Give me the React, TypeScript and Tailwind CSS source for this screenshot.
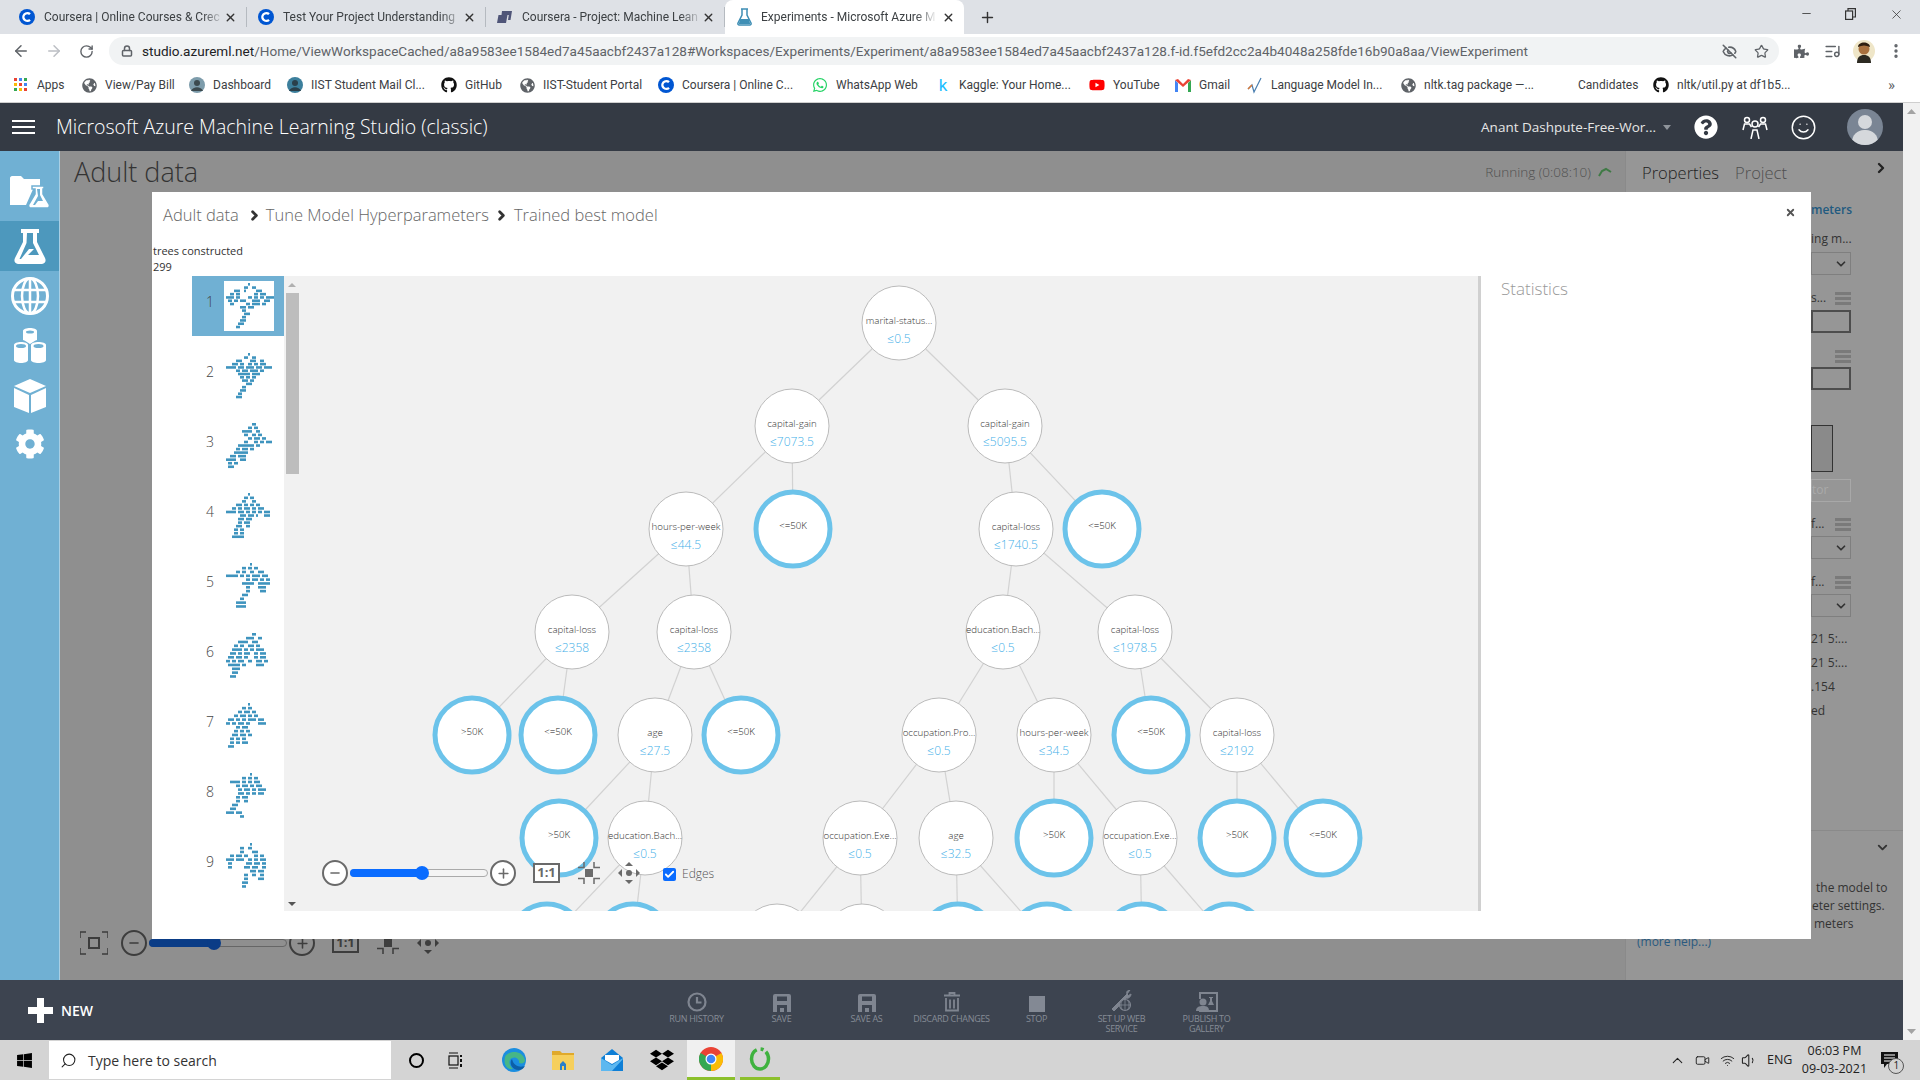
import React from 'react';
import { ArrowLeft, ArrowRight, RotateCw, Lock, Star, EyeOff, ListMusic, MoreVertical, Plus, ChevronDown, ChevronRight, ChevronUp, Search, Smile, Wifi, Volume1, Video, X, Minus, Check } from 'lucide-react';
import { FaGithub, FaWhatsapp, FaYoutube, FaDropbox, FaWindows, FaPuzzlePiece, FaGlobeAmericas, FaCog, FaQuestionCircle } from 'react-icons/fa';

const Coursera = ({ size = 16 }: { size?: number }) => (
  <svg width={size} height={size} viewBox="0 0 16 16">
    <circle cx="8" cy="8" r="8" fill="#0056d2" />
    <path d="M11 5.2A3.9 3.9 0 1 0 11 10.8" fill="none" stroke="#fff" strokeWidth="2.4" />
  </svg>
);

const FlaskFav = () => (
  <svg width="15" height="18" viewBox="0 0 15 18">
    <path d="M4 1h7M5 1v6L1 15c-.4 1 .2 2 1.200 2h10.600c1 0 1.600-1 1.200-2L10 7V1" fill="none" stroke="#3f8fb5" strokeWidth="1.500" />
    <path d="M3.200 11h8.600l1.500 5H1.700z" fill="#3f8fb5" />
  </svg>
);

const tabs = [
  { title: 'Coursera | Online Courses & Crec', icon: <Coursera /> },
  { title: 'Test Your Project Understanding', icon: <Coursera /> },
  {
    title: 'Coursera - Project: Machine Lean',
    icon: (
      <svg width="16" height="16" viewBox="0 0 16 16">
        <path d="M5 2h10l-1.500 9H11l.8-5H4.500z" fill="#4f5578" />
        <path d="M1.500 6h9l-1.500 8H0z" fill="#4f5578" />
      </svg>
    ),
  },
];

const DarkGlobe = () => <FaGlobeAmericas size={15} className="text-[#5f6368]" />;
const Photo = ({ a, b }: { a: string; b: string }) => (
  <svg width="16" height="16" viewBox="0 0 16 16">
    <circle cx="8" cy="8" r="8" fill={a} />
    <circle cx="8" cy="6" r="3" fill={b} />
    <path d="M2 14c2-5 10-5 12 0z" fill={b} />
  </svg>
);

const bookmarks = [
  { w: 'w-[68px]', label: 'Apps', icon: (
    <svg width="14" height="14" viewBox="0 0 14 14">
      <rect x="0" y="0" width="3" height="3" fill="#ea4335" /><rect x="5" y="0" width="3" height="3" fill="#4285f4" /><rect x="10" y="0" width="3" height="3" fill="#34a853" />
      <rect x="0" y="5" width="3" height="3" fill="#fbbc05" /><rect x="5" y="5" width="3" height="3" fill="#ea4335" /><rect x="10" y="5" width="3" height="3" fill="#4285f4" />
      <rect x="0" y="10" width="3" height="3" fill="#34a853" /><rect x="5" y="10" width="3" height="3" fill="#fbbc05" /><rect x="10" y="10" width="3" height="3" fill="#ea4335" />
    </svg>
  ) },
  { w: 'w-[108px]', label: 'View/Pay Bill', icon: <DarkGlobe /> },
  { w: 'w-[98px]', label: 'Dashboard', icon: <Photo a="#7d9cab" b="#3c4a4f" /> },
  { w: 'w-[154px]', label: 'IIST Student Mail Cl...', icon: <Photo a="#3c7f9c" b="#2a3f4a" /> },
  { w: 'w-[78px]', label: 'GitHub', icon: <FaGithub size={16} className="text-[#111]" /> },
  { w: 'w-[139px]', label: 'IIST-Student Portal', icon: <DarkGlobe /> },
  { w: 'w-[154px]', label: 'Coursera | Online C...', icon: <Coursera /> },
  { w: 'w-[123px]', label: 'WhatsApp Web', icon: <FaWhatsapp size={16} className="text-[#25d366]" /> },
  { w: 'w-[154px]', label: 'Kaggle: Your Home...', icon: <span className="w-4 text-center text-[17px] leading-4 text-[#20beff]">k</span> },
  { w: 'w-[86px]', label: 'YouTube', icon: <FaYoutube size={16} className="text-[#ff0000]" /> },
  { w: 'w-[72px]', label: 'Gmail', icon: (
    <svg width="16" height="14" viewBox="0 0 16 14">
      <path d="M0 2v12h3V5z" fill="#4285f4" /><path d="M16 2v12h-3V5z" fill="#34a853" />
      <path d="M0 2l3-1 5 5 5-5 3 1-8 7z" fill="#ea4335" />
    </svg>
  ) },
  { w: 'w-[153px]', label: 'Language Model In...', icon: (
    <svg width="16" height="18" viewBox="0 0 16 18" fill="none">
      <path d="M1 13l4-4 2 7 7-14" stroke="#4a7fb0" strokeWidth="1.200" />
      <path d="M1 13l4-4" stroke="#e0762f" strokeWidth="1.200" />
    </svg>
  ) },
  { w: 'w-[154px]', label: 'nltk.tag package —...', icon: <DarkGlobe /> },
  { w: 'w-[99px]', label: 'Candidates', icon: <span className="w-4" /> },
  { w: 'w-[227px]', label: 'nltk/util.py at df1b5...', icon: <FaGithub size={16} className="text-[#111]" /> },
];

// drawn mini trees for the left list
const thumbs = [
  ['            #', '          ##  ##', '     ###  #     ###', '   ## ##       ## ###', ' #### ##    ## ## ## ####', '  ## ## ###   ####  ###', '   ##      ## #### ##', '        ### ###', '         ##', '          ###', '         ##', '        ###', '       ###', '      ##'],
  ['            #', '          ##  ##', '      ###    ###  ##', '    ### ##  ## ## ###', ' ##### ### #### ### ####', '      ## ### #### ##', '       ###### ####', '        ## ## ##', '         ### ##', '           ###', '         ##', '        ###', '       ##', '      ###'],
  ['              ##', '            ## ##', '         #####  ##', '          ##  ## ##', '            ## ### ##', '          ##   ## ## ###', '       ######## ##', '      ## ### ##', '     #######', '   ### ####', ' #####  ###', '  ## ##', '  ###'],
  ['            #', '          ## ##', '         ##   ##', '      ### ## ## ##', '    ## ## ### ## ###', ' ##### ### ## ## ## ###', '        ### ### #   ###', '       ### ###', '       ## ###', '      ###  ##', '     ## ##', '     ## ##', '    ######'],
  ['             #', '         ## ## ##', '      ## ##  ##  ###', ' ###### ## ## #### ###', '           ## ### ## ##', '         ######  ######', '           ##    ####', '           ##     ###', '         ###', '        ##', '      #####', '      #####'],
  ['              ##', '           ####  ##', '       #####  ###', '     ## ##  ### ##', '    ##### ## ## ####', '   ### ## ###  ## ###', '  ### ### ##   ## ###', ' ## ## ###  ##  ### ##', '  ###### ##     ####', '    ####', '    ###', '   ###'],
  ['            #', '         ## ##', '       ## ### ##', '     ## ### ## ##', '  ### ## ## #### ###', ' ## ## ### ##    ####', '      ## ###', '     ## ## ##', '    ### ### ##', '   ## ## ##', '   ## ## ###', '  ###'],
  ['             #', '         ## ## ##', '   ##### ## ## ###', '      ## ### ## ###', '       ## ### ## ####', '       ### ## ## ###', '      ## ###', '      ##  ##', '    ###', '   ###', ' #### ###', '        ##'],
  ['             #', '        ##  ##', '        ##    ###', '   ## ### ##   ## ##', ' #### ####  ## ## ###', '  ##       ### ### ##', '  ##      ### ###  ##', '             ### ###', '          ##  ##  ##', '          ##     ###', '         ###', '         ##'],
];

const Thumb = ({ rows }: { rows: string[] }) => (
  <svg width="50" height="50" viewBox="0 0 50 50">
    {rows.flatMap((row, r) =>
      row.split('').map((ch, c) =>
        ch === '#' ? <rect key={`${r}-${c}`} x={c * 2} y={(r * 46) / rows.length + 2} width="2" height="2.600" fill="#3f94be" /> : null
      )
    )}
  </svg>
);

type TreeNode = { x: number; y: number; label: string; value?: string };

const nodes: TreeNode[] = [
  { x: 899, y: 323, label: 'marital-status...', value: '≤0.5' },
  { x: 792, y: 426, label: 'capital-gain', value: '≤7073.5' },
  { x: 1005, y: 426, label: 'capital-gain', value: '≤5095.5' },
  { x: 686, y: 529, label: 'hours-per-week', value: '≤44.5' },
  { x: 793, y: 529, label: '<=50K' },
  { x: 1016, y: 529, label: 'capital-loss', value: '≤1740.5' },
  { x: 1102, y: 529, label: '<=50K' },
  { x: 572, y: 632, label: 'capital-loss', value: '≤2358' },
  { x: 694, y: 632, label: 'capital-loss', value: '≤2358' },
  { x: 1003, y: 632, label: 'education.Bach...', value: '≤0.5' },
  { x: 1135, y: 632, label: 'capital-loss', value: '≤1978.5' },
  { x: 472, y: 735, label: '>50K' },
  { x: 558, y: 735, label: '<=50K' },
  { x: 655, y: 735, label: 'age', value: '≤27.5' },
  { x: 741, y: 735, label: '<=50K' },
  { x: 939, y: 735, label: 'occupation.Pro...', value: '≤0.5' },
  { x: 1054, y: 735, label: 'hours-per-week', value: '≤34.5' },
  { x: 1151, y: 735, label: '<=50K' },
  { x: 1237, y: 735, label: 'capital-loss', value: '≤2192' },
  { x: 559, y: 838, label: '>50K' },
  { x: 645, y: 838, label: 'education.Bach...', value: '≤0.5' },
  { x: 860, y: 838, label: 'occupation.Exe...', value: '≤0.5' },
  { x: 956, y: 838, label: 'age', value: '≤32.5' },
  { x: 1054, y: 838, label: '>50K' },
  { x: 1140, y: 838, label: 'occupation.Exe...', value: '≤0.5' },
  { x: 1237, y: 838, label: '>50K' },
  { x: 1323, y: 838, label: '<=50K' },
  // last row is cut by the canvas edge, only the arcs show
  { x: 547, y: 941, label: '' },
  { x: 633, y: 941, label: '' },
  { x: 777, y: 941, label: '', value: ' ' },
  { x: 862, y: 941, label: '', value: ' ' },
  { x: 958, y: 941, label: '' },
  { x: 1047, y: 941, label: '' },
  { x: 1142, y: 941, label: '' },
  { x: 1229, y: 941, label: '' },
];

const edges = [[0, 1], [0, 2], [1, 3], [1, 4], [2, 5], [2, 6], [3, 7], [3, 8], [5, 9], [5, 10], [7, 11], [7, 12], [8, 13], [8, 14], [9, 15], [9, 16], [10, 17], [10, 18], [13, 19], [13, 20], [15, 21], [15, 22], [16, 23], [16, 24], [18, 25], [18, 26], [20, 27], [20, 28], [21, 29], [21, 30], [22, 31], [22, 32], [24, 33], [24, 34]];

const CANVAS_X = 284;
const CANVAS_Y = 276;

const NodeBubble = ({ node }: { node: TreeNode }) =>
  node.value ? (
    <div
      className="absolute flex h-[75px] w-[75px] -translate-x-1/2 -translate-y-1/2 flex-col items-center rounded-full border border-[#bbbbbb] bg-white pt-[28px]"
      style={{ left: node.x - CANVAS_X, top: node.y - CANVAS_Y }}
    >
      {node.label && <div className="text-[9.700px] leading-[12px] font-light whitespace-nowrap text-[#333333]">{node.label}</div>}
      {node.label && <div className="mt-[5px] text-[12px] leading-[14px] font-light text-[#45b0e8]">{node.value}</div>}
    </div>
  ) : (
    <div
      className="absolute flex h-[79px] w-[79px] -translate-x-1/2 -translate-y-1/2 flex-col items-center rounded-full border-[5px] border-[#6cc3ea] bg-white pt-[25px]"
      style={{ left: node.x - CANVAS_X, top: node.y - CANVAS_Y }}
    >
      {node.label && <div className="text-[9.700px] leading-[12px] font-light whitespace-nowrap text-[#222222]">{node.label}</div>}
    </div>
  );

const FitIcon = ({ color }: { color: string }) => (
  <svg width="22" height="22" viewBox="0 0 22 22" fill="none" stroke={color} strokeWidth="1.500">
    <rect x="7" y="7" width="8" height="8" fill={color} stroke="none" />
    <path d="M6 0v5.500H0M16 0v5.500h6M6 22v-5.500H0M16 22v-5.500h6" />
  </svg>
);

const PanIcon = ({ color }: { color: string }) => (
  <svg width="22" height="22" viewBox="0 0 22 22" fill={color}>
    <circle cx="11" cy="11" r="3" />
    <path d="M11 0l4 4H7zM11 22l-4-4h8zM0 11l4-4v8zM22 11l-4 4V7z" />
  </svg>
);

// zoom toolbar, used on the graph and (dimmed) behind the dialog
const ZoomControls = ({ dim }: { dim?: boolean }) => {
  const color = dim ? '#3d3d3d' : '#6a6a6a';
  return (
    <div className="flex items-center">
      <div className={dim ? 'flex h-[26px] w-[26px] items-center justify-center rounded-full border-[2.500px] border-[#3d3d3d]' : 'flex h-[26px] w-[26px] items-center justify-center rounded-full border-[2.500px] border-[#6a6a6a] bg-white'}>
        <Minus size={14} strokeWidth={2.500} color={color} />
      </div>
      <div className={dim ? 'relative mx-[2px] h-[8px] w-[138px] rounded-full border border-[#666666]' : 'relative mx-[2px] h-[8px] w-[138px] rounded-full border border-[#aaaaaa] bg-[#f4f4f4]'}>
        <div className={dim ? 'absolute -top-[1px] -left-[1px] h-[8px] w-[64px] rounded-l-full bg-[#0a3c86]' : 'absolute -top-[1px] -left-[1px] h-[8px] w-[72px] rounded-l-full bg-[#0a6cff]'} />
        <div className={dim ? 'absolute -top-[4px] left-[57px] h-[14px] w-[14px] rounded-full bg-[#0a3c86]' : 'absolute -top-[4px] left-[64px] h-[14px] w-[14px] rounded-full bg-[#0a6cff]'} />
      </div>
      <div className={dim ? 'flex h-[26px] w-[26px] items-center justify-center rounded-full border-[2.500px] border-[#3d3d3d]' : 'flex h-[26px] w-[26px] items-center justify-center rounded-full border-[2.500px] border-[#6a6a6a] bg-white'}>
        <Plus size={15} strokeWidth={2.500} color={color} />
      </div>
      <div className={dim ? 'ml-[17px] flex h-[20px] w-[27px] items-center justify-center border-2 border-[#3d3d3d] text-[13px] font-bold text-[#3d3d3d]' : 'ml-[17px] flex h-[20px] w-[27px] items-center justify-center border-2 border-[#6a6a6a] bg-white text-[13px] font-bold text-[#6a6a6a]'}>
        1:1
      </div>
      <div className="ml-[18px]"><FitIcon color={color} /></div>
      <div className="ml-[18px]"><PanIcon color={color} /></div>
    </div>
  );
};

const LinesIcon = () => (
  <div className="flex w-4 flex-col gap-[2px]">
    <div className="h-[3px] bg-[#7a7a7a]" />
    <div className="h-[3px] bg-[#7a7a7a]" />
    <div className="h-[3px] bg-[#7a7a7a]" />
  </div>
);

const SelectBox = ({ className }: { className: string }) => (
  <div className={`flex h-[23px] w-[40px] items-center justify-end border border-[#7f7f7f] pr-[2px] ${className}`}>
    <ChevronDown size={14} strokeWidth={3} className="text-[#333333]" />
  </div>
);

const SaveIcon = () => (
  <svg width="18" height="18" viewBox="0 0 18 18" fill="#7f8590" fillRule="evenodd">
    <path d="M2 0h14a2 2 0 0 1 2 2v16H0V2a2 2 0 0 1 2-2zM4 2.500v4.500h10V2.500zM4 11v7h3v-4h4v4h3v-7z" />
  </svg>
);

const commands = [
  { label: 'RUN HISTORY', icon: (
    <svg width="20" height="20" viewBox="0 0 20 20" fill="none" stroke="#7f8590" strokeWidth="2.200">
      <circle cx="10" cy="10" r="8.500" /><path d="M10 5v5.500h4.500" />
    </svg>
  ) },
  { label: 'SAVE', icon: <SaveIcon /> },
  { label: 'SAVE AS', icon: <SaveIcon /> },
  { label: 'DISCARD CHANGES', icon: (
    <svg width="18" height="20" viewBox="0 0 18 20" fill="none" stroke="#7f8590" strokeWidth="1.800">
      <path d="M1 3.500h16M6.500 3V1h5v2M3 6v12.500h12V6M7 7.500v9M11 7.500v9" />
    </svg>
  ) },
  { label: 'STOP', icon: <div className="h-4 w-4 bg-[#838994]" /> },
  { label: 'SET UP WEB SERVICE', icon: (
    <svg width="24" height="22" viewBox="0 0 24 22" fill="none" stroke="#7f8590">
      <path d="M20 0c-2.500 0-4 2-3 4L5 16l-3 3 2 2 3-3 9-10c2 1 5-1 5-4l-2.500 1.500L17 4z" fill="#7f8590" />
      <circle cx="15" cy="15" r="5.500" fill="#3d4450" strokeWidth="1.200" /><path d="M9.500 15h11M15 9.500v11M12.500 10c-2 3-2 7 0 10M17.500 10c2 3 2 7 0 10" strokeWidth="0.800" />
    </svg>
  ) },
  { label: 'PUBLISH TO GALLERY', icon: (
    <svg width="22" height="20" viewBox="0 0 22 20" fill="#7f8590">
      <path fillRule="evenodd" d="M3 0h19v20H3v-2h17V2H5v5H3z" />
      <circle cx="7" cy="10" r="3.500" /><path d="M0 19c0-4 3-5 7-5s6 1 6 5z" />
      <path d="M13 5h4v1h-1v3l2 4h-6l2-4V6h-1z" />
    </svg>
  ) },
];

const NavFlask = ({ cut }: { cut: string }) => (
  <svg width="32" height="35" viewBox="0 0 32 35">
    <path d="M7 0h18v4h-2v9l8 16c1.500 3 0 6-3 6H4c-3 0-4.500-3-3-6l8-16V4H7z" fill="#fff" />
    <path d="M13 4h6v10l6 12H14l6-6h-5l-8 10h-1.500l7-16z" fill={cut} />
  </svg>
);

const NavRail = () => (
  <div className="flex w-[60px] flex-col items-center border-r border-[#a9cfe4] bg-[#70b0d3]">
    <div className="flex h-[70px] w-full items-start justify-center pt-[25px]">
      <svg width="40" height="32" viewBox="0 0 40 32">
        <path d="M0 2c0-1 1-2 2-2h9l3 3h16v8h-6l-8 18H0z" fill="#fff" />
        <path d="M22 10h12v3h-1v5l6 10c1 2 0 4-2 4H21c-2 0-3-2-2-4l6-10v-5h-3z" fill="#fff" stroke="#70b0d3" strokeWidth="1.500" />
        <path d="M27 13h3v6l3 6h-5l-3 4h-2l5-9z" fill="#70b0d3" />
      </svg>
    </div>
    <div className="flex h-[50px] w-full items-center justify-center bg-[#4d98bd]"><NavFlask cut="#4d98bd" /></div>
    <div className="mt-[6px] flex h-[38px] items-center">
      <svg width="38" height="38" viewBox="0 0 38 38" fill="none" stroke="#fff" strokeWidth="2.500">
        <circle cx="19" cy="19" r="17.500" strokeWidth="3" />
        <ellipse cx="19" cy="19" rx="8" ry="17.500" /><path d="M19 1.500v35M2 13h34M2 25h34" />
      </svg>
    </div>
    <div className="mt-[13px]">
      <svg width="32" height="35" viewBox="0 0 32 35" fill="#fff">
        <path d="M9 3c0-4 14-4 14 0v9c-3 1-4 2-7 4-3-2-4-3-7-4z" />
        <ellipse cx="16" cy="4" rx="4" ry="1.500" fill="#70b0d3" />
        <path d="M0 17c0-4 14-4 14 0v15c0 4-14 4-14 0z" /><ellipse cx="7" cy="18" rx="5" ry="2" fill="#70b0d3" />
        <path d="M17 17c0-4 15-4 15 0v15c0 4-15 4-15 0z" /><ellipse cx="24.500" cy="18" rx="5" ry="2" fill="#70b0d3" />
      </svg>
    </div>
    <div className="mt-[16px]">
      <svg width="32" height="34" viewBox="0 0 32 34" fill="#fff">
        <path d="M16 0l16 7-16 7L0 7z" /><path d="M0 9l15 7v18L0 28z" /><path d="M32 9l-15 7v18l15-6z" />
      </svg>
    </div>
    <FaCog size={30} className="mt-[16px] text-white" />
  </div>
);

export default function App() {
  return (
    <div className="relative flex h-[1080px] w-[1920px] flex-col overflow-hidden bg-[#8f8f8f] font-['Open_Sans',sans-serif]">
      {/* browser tabs */}
      <div className="flex h-[34px] shrink-0 items-stretch bg-[#dee1e6] pl-[8px] font-['Roboto',sans-serif]">
        {tabs.map((t, i) => (
          <div key={i} className="my-[7px] flex w-[239px] items-center border-r border-[#9aa0a6]/60 pr-[9px] pl-[11px]">
            {t.icon}
            <span className="ml-[9px] w-[180px] overflow-hidden text-[12px] whitespace-nowrap text-[#3c4043] [mask-image:linear-gradient(to_right,black_88%,transparent)]">{t.title}</span>
            <X size={13} strokeWidth={2.500} className="ml-auto text-[#333333]" />
          </div>
        ))}
        <div className="flex w-[239px] items-center rounded-t-lg bg-white pr-[9px] pl-[12px]">
          <FlaskFav />
          <span className="ml-[9px] w-[176px] overflow-hidden text-[12px] whitespace-nowrap text-[#3c4043] [mask-image:linear-gradient(to_right,black_88%,transparent)]">Experiments - Microsoft Azure M</span>
          <X size={13} strokeWidth={2.500} className="ml-auto text-[#333333]" />
        </div>
        <Plus size={17} strokeWidth={2} className="mt-[9px] ml-[15px] text-[#333333]" />
        <div className="ml-auto flex items-start pt-[7px] pr-[16px] text-[#333333]">
          <Minus size={13} strokeWidth={1.500} />
          <svg className="mt-[1px] ml-[32px]" width="11" height="12" viewBox="0 0 11 12" fill="none" stroke="#333" strokeWidth="1.200"><rect x="0.600" y="3" width="7" height="8.400" /><path d="M3 3V.6h7.400v8.400H8" /></svg>
          <X size={15} strokeWidth={1.200} className="ml-[33px]" />
        </div>
      </div>

      {/* address row */}
      <div className="flex h-[34px] shrink-0 items-center bg-white">
        <ArrowLeft size={18} strokeWidth={2} className="ml-[12px] text-[#5f6368]" />
        <ArrowRight size={18} strokeWidth={2} className="ml-[15px] text-[#bcbfc4]" />
        <RotateCw size={15} strokeWidth={2.200} className="ml-[16px] text-[#5f6368]" />
        <div className="ml-[15px] flex h-[28px] w-[1670px] items-center rounded-full bg-[#f1f3f4] pr-[10px] pl-[12px]">
          <Lock size={12} strokeWidth={3} className="text-[#5f6368]" />
          <span className="ml-[9px] text-[13.550px] whitespace-nowrap text-[#5f6368] font-['Roboto',sans-serif]">
            <span className="text-[#202124]">studio.azureml.net</span>/Home/ViewWorkspaceCached/a8a9583ee1584ed7a45aacbf2437a128#Workspaces/Experiments/Experiment/a8a9583ee1584ed7a45aacbf2437a128.f-id.f5efd2cc2a4b4048a258fde16b90a8aa/ViewExperiment
          </span>
          <EyeOff size={15} strokeWidth={2.500} className="ml-auto text-[#5f6368]" />
          <Star size={15} strokeWidth={2} className="ml-[17px] text-[#5f6368]" />
        </div>
        <FaPuzzlePiece size={15} className="ml-[15px] text-[#5f6368]" />
        <ListMusic size={17} strokeWidth={2} className="ml-[15px] text-[#5f6368]" />
        <svg className="ml-[12px]" width="22" height="24" viewBox="0 0 22 24">
          <circle cx="11" cy="12" r="11" fill="#efe6c8" />
          <path d="M4 24c0-6 3-8 7-8s7 2 7 8z" fill="#2d2a22" />
          <circle cx="11" cy="10" r="5.500" fill="#a9713f" />
          <path d="M5 8c0-6 12-6 12 0-4-2-8-2-12 0z" fill="#2e1e10" />
        </svg>
        <MoreVertical size={18} strokeWidth={2.500} className="ml-[12px] text-[#5f6368]" />
      </div>

      {/* bookmarks */}
      <div className="flex h-[35px] shrink-0 items-center border-b border-[#cfcfcf] bg-white pl-[13px] text-[12px] text-[#3c4043] font-['Roboto',sans-serif]">
        {bookmarks.map((b) => (
          <div key={b.label} className={`flex items-center gap-2 whitespace-nowrap ${b.w}`}>
            <span className="flex w-4 justify-center">{b.icon}</span>
            <span>{b.label}</span>
          </div>
        ))}
        <span className="ml-[8px] text-[15px] text-[#5f6368]">»</span>
      </div>

      <div className="flex min-h-0 flex-1">
        <div className="flex min-w-0 flex-1 flex-col">
          {/* studio header */}
          <div className="flex h-[48px] shrink-0 items-center bg-[#343a44] pl-[12px] text-white">
            <div className="flex w-[23px] flex-col gap-[4px]">
              <div className="h-[2px] bg-white" />
              <div className="h-[2px] bg-white" />
              <div className="h-[2px] bg-white" />
            </div>
            <span className="mb-[1px] ml-[21px] text-[19.500px] font-light whitespace-nowrap">Microsoft Azure Machine Learning Studio (classic)</span>
            <span className="ml-auto text-[13.500px] whitespace-nowrap text-[#e6e6e6]">Anant Dashpute-Free-Wor...</span>
            <svg className="ml-[7px]" width="8" height="5" viewBox="0 0 8 5"><path d="M0 0h8L4 5z" fill="#8f949b" /></svg>
            <FaQuestionCircle size={24} className="ml-[23px]" />
            <svg className="ml-[24px]" width="26" height="24" viewBox="0 0 26 24" fill="none" stroke="#fff" strokeWidth="1.500">
              <circle cx="13" cy="9" r="3" /><path d="M9 24l2-9h4l2 9" /><circle cx="5" cy="5" r="2.500" /><path d="M1 15l1.500-6h5l2 3" /><circle cx="21" cy="5" r="2.500" /><path d="M25 15l-1.500-6h-5l-2 3" />
            </svg>
            <Smile size={27} strokeWidth={1.300} className="ml-[22px]" />
            <div className="relative mr-[20px] ml-[30px] h-[36px] w-[36px] overflow-hidden rounded-full bg-[#7a8594]">
              <div className="absolute top-[6px] left-[11px] h-[14px] w-[14px] rounded-full bg-[#d5d8dc]" />
              <div className="absolute top-[21px] left-[5px] h-[24px] w-[26px] rounded-full bg-[#d5d8dc]" />
            </div>
          </div>

          <div className="flex min-h-0 flex-1">
            <NavRail />
            <div className="flex min-w-0 flex-1 flex-col">
              <div className="flex items-center pt-[3px] pr-[13px] pl-[14px]">
                <span className="text-[27px] leading-[36px] font-light text-[#333333]">Adult data</span>
                <span className="ml-auto text-[13.500px] font-light text-[#505050]">Running (0:08:10)</span>
                <svg className="ml-[7px]" width="14" height="10" viewBox="0 0 14 10" fill="none" stroke="#3f7a45" strokeWidth="2"><path d="M1 9l3-5 4-2 5 3" /></svg>
              </div>
              <div className="mt-auto mb-[24px] ml-[20px] flex items-center">
                <svg width="28" height="24" viewBox="0 0 28 24" fill="none" stroke="#3d3d3d" strokeWidth="1.500">
                  <path d="M0 7V1h6M22 1h6v6M28 17v6h-6M6 23H0v-6" /><rect x="9" y="7" width="10" height="10" strokeWidth="2" />
                </svg>
                <div className="ml-[13px]"><ZoomControls dim /></div>
              </div>
            </div>

            {/* properties panel, mostly behind the dialog */}
            <div className="flex w-[278px] shrink-0 flex-col border-l border-[#8a8a8a] bg-[#969696] text-[13px] text-[#333333]">
              <div className="flex h-[44px] items-center pr-[14px] pl-[16px] text-[16.500px] font-light">
                <span className="text-[#222222]">Properties</span>
                <span className="ml-[16px] text-[#4f4f4f]">Project</span>
                <ChevronRight size={16} strokeWidth={3.500} className="mb-[10px] ml-auto text-[#222222]" />
              </div>
              <div className="flex flex-1 flex-col pl-[185px] text-[12px]">
                <div className="mt-[5px] h-[20px] leading-[20px] font-semibold whitespace-nowrap text-[#1f5a80]">meters</div>
                <div className="mt-[9px] h-[20px] leading-[20px]">ing m...</div>
                <SelectBox className="mt-[3px]" />
                <div className="mt-[13px] flex h-[20px] w-[40px] items-center justify-between leading-[20px]"><span>s...</span><LinesIcon /></div>
                <div className="mt-[2px] h-[23px] w-[40px] border-2 border-[#4d4d4d]" />
                <div className="mt-[13px] flex h-[20px] w-[40px] items-center justify-end"><LinesIcon /></div>
                <div className="mt-[1px] h-[23px] w-[40px] border-2 border-[#4d4d4d]" />
                <div className="mt-[35px] h-[47px] w-[22px] border border-[#333333] bg-[#8a8a8a]" />
                <div className="mt-[7px] h-[23px] w-[40px] border border-[#a8a8a8] leading-[20px] text-[#aaaaaa]">tor</div>
                <div className="mt-[12px] flex h-[20px] w-[40px] items-center justify-between leading-[20px]"><span>f...</span><LinesIcon /></div>
                <SelectBox className="mt-[2px]" />
                <div className="mt-[13px] flex h-[20px] w-[40px] items-center justify-between leading-[20px]"><span>f...</span><LinesIcon /></div>
                <SelectBox className="mt-[2px]" />
                <div className="mt-[10px] h-[24px] leading-[24px]">21 5:...</div>
                <div className="h-[24px] leading-[24px]">21 5:...</div>
                <div className="h-[24px] leading-[24px]">.154</div>
                <div className="h-[24px] leading-[24px]">ed</div>
              </div>
              <div className="h-[150px] border-t border-[#8a8a8a] text-[12px]">
                <div className="flex h-[36px] justify-end pt-[9px] pr-[13px]">
                  <ChevronDown size={15} strokeWidth={3} className="text-[#333333]" />
                </div>
                <div className="mt-[11px] h-[19px] pl-[190px] leading-[19px] whitespace-nowrap">the model to</div>
                <div className="h-[18px] pl-[186px] leading-[18px] whitespace-nowrap">eter settings.</div>
                <div className="h-[18px] pl-[188px] leading-[18px] whitespace-nowrap">meters</div>
                <div className="pl-[11px] leading-[18px] text-[#2a5a80]">(more help...)</div>
              </div>
            </div>
          </div>

          {/* command bar */}
          <div className="flex h-[60px] shrink-0 items-start bg-[#3d4450]">
            <div className="flex h-full w-[654px] items-center pl-[28px]">
              <svg width="25" height="25" viewBox="0 0 25 25" fill="#fff"><path d="M9 0h7v9h9v7h-9v9H9v-9H0V9h9z" /></svg>
              <span className="ml-[8px] text-[14px] font-semibold text-white">NEW</span>
            </div>
            {commands.map((c) => (
              <div key={c.label} className="flex w-[85px] flex-col items-center">
                <div className="flex h-[34px] items-end pb-[2px]">{c.icon}</div>
                <div className="w-[80px] text-center text-[9px] leading-[10px] font-normal tracking-[-0.3px] text-[#868c96]">{c.label}</div>
              </div>
            ))}
          </div>
        </div>

        {/* page scrollbar */}
        <div className="flex w-[17px] shrink-0 flex-col items-center justify-between bg-[#f1f1f1] py-[6px]">
          <svg width="9" height="5" viewBox="0 0 9 5"><path d="M4.500 0L9 5H0z" fill="#a3a3a3" /></svg>
          <svg width="9" height="5" viewBox="0 0 9 5"><path d="M4.500 5L9 0H0z" fill="#a3a3a3" /></svg>
        </div>
      </div>

      {/* taskbar */}
      <div className="flex h-[40px] shrink-0 items-center bg-[#d4d4d4] text-[#222222]">
        <div className="flex w-[49px] justify-center"><FaWindows size={17} className="text-black" /></div>
        <div className="flex h-[38px] w-[342px] items-center bg-white pl-[11px]">
          <Search size={17} strokeWidth={1.500} className="-scale-x-100 text-[#222222]" />
          <span className="ml-[11px] text-[14px] text-[#333333]">Type here to search</span>
        </div>
        <div className="ml-[18px] h-[15px] w-[15px] rounded-full border-2 border-black" />
        <svg className="ml-[24px]" width="16" height="17" viewBox="0 0 16 17" fill="none" stroke="#111" strokeWidth="1.200"><path d="M1 1h9M1 16h9" /><rect x="1" y="4" width="9" height="9" /><path d="M13 3v2M13 7v3M13 12v3" strokeWidth="2" /></svg>
        <svg className="ml-[38px]" width="24" height="24" viewBox="0 0 24 24">
          <circle cx="12" cy="12" r="12" fill="#1b8ee0" />
          <path d="M3 9c2-6 17-8 20 3 0 3-3 4-6 3 1-3-3-7-7-5-4 2-3 8 1 11-5 1-10-3-8-12z" fill="#5ac85f" opacity="0.700" />
          <path d="M10 11c-3 3-1 11 7 11 2 0 4-1 6-4-3 1-11 2-13-7z" fill="#0c5fa8" />
        </svg>
        <svg className="ml-[25px]" width="24" height="24" viewBox="0 0 24 24">
          <path d="M1 3h8l2 2h12v4H1z" fill="#e0a92b" /><path d="M1 7h22v15H1z" fill="#f6cf5c" /><path d="M9 22v-6l3-3 3 3v6h-2v-4h-2v4z" fill="#2a7fc9" />
        </svg>
        <svg className="ml-[25px]" width="24" height="24" viewBox="0 0 24 24">
          <path d="M12 1l11 9v13H1V10z" fill="#0f7fd6" /><path d="M1 10l11 7 11-7v1l-11 12H1z" fill="#5db8f0" /><path d="M5 7h14v5l-7 4-7-4z" fill="#fff" />
        </svg>
        <FaDropbox size={24} className="ml-[26px] text-black" />
        <div className="ml-[13px] flex h-full w-[48px] items-center justify-center border-b-[3px] border-[#8cc02c] bg-[#f0f0f0]">
          <svg width="24" height="24" viewBox="0 0 24 24">
            <circle cx="12" cy="12" r="12" fill="#ea4335" />
            <path d="M12 12L1.600 6A12 12 0 0 0 12 24z" fill="#34a853" />
            <path d="M12 12V24A12 12 0 0 0 22.400 6z" fill="#fbbc05" />
            <circle cx="12" cy="12" r="5.500" fill="#fff" /><circle cx="12" cy="12" r="4.300" fill="#4285f4" />
          </svg>
        </div>
        <div className="ml-[5px] flex h-full w-[40px] items-center justify-center border-b-[3px] border-[#8cc02c]">
          <svg width="22" height="24" viewBox="0 0 22 24" fill="none"><ellipse cx="11" cy="12" rx="8.500" ry="10" stroke="#3fb23f" strokeWidth="3.500" strokeDasharray="40 4 3 3" /></svg>
        </div>
        <ChevronUp size={17} strokeWidth={1.500} className="ml-[889px]" />
        <Video size={15} strokeWidth={1.500} className="ml-[9px]" />
        <Wifi size={15} strokeWidth={1.500} className="ml-[10px]" />
        <Volume1 size={17} strokeWidth={1.500} className="ml-[6px]" />
        <span className="ml-[9px] text-[12.500px] whitespace-nowrap">ENG</span>
        <div className="ml-[6px] flex w-[72px] flex-col items-center text-[12.500px] leading-[18px] whitespace-nowrap">
          <span>06:03 PM</span>
          <span>09-03-2021</span>
        </div>
        <div className="relative ml-[11px]">
          <svg width="17" height="17" viewBox="0 0 17 17"><path d="M0 0h17v12H6l-3 4v-4H0z" fill="#111" /><path d="M3 3h11M3 6h11M3 9h8" stroke="#fff" /></svg>
          <div className="absolute top-[6px] left-[7px] flex h-[16px] w-[16px] items-center justify-center rounded-full border border-[#555555] bg-[#d4d4d4] text-[10px]">1</div>
        </div>
      </div>

      {/* tree visualization dialog */}
      <div className="absolute top-[192px] left-[152px] flex h-[747px] w-[1659px] flex-col bg-white">
        <div className="relative flex h-[45px] shrink-0 items-center pt-[1px] pl-[11px] text-[16.500px] font-light text-[#666666]">
          <span>Adult data</span>
          <ChevronRight size={15} strokeWidth={4.500} className="mr-[4px] ml-[8px] text-[#333333]" />
          <span>Tune Model Hyperparameters</span>
          <ChevronRight size={15} strokeWidth={4.500} className="mx-[5px] text-[#333333]" />
          <span>Trained best model</span>
          <X size={11} strokeWidth={4} className="absolute top-[15px] right-[15px] text-[#555555]" />
        </div>
        <div className="h-[39px] shrink-0 pt-[6px] pl-px text-[11px] leading-[16px] text-[#333333]">
          <div>trees constructed</div>
          <div>299</div>
        </div>
        <div className="flex h-[637px] shrink-0 items-start">
          <div className="ml-[40px] h-[637px] w-[92px] shrink-0 overflow-hidden">
            {thumbs.map((rows, i) => (
              <div key={i} className={i === 0 ? 'mb-[10px] flex h-[60px] items-center bg-[#70b0d3]' : 'mb-[10px] flex h-[60px] items-center'}>
                <span className="mb-[9px] w-[32px] pl-[4px] text-center text-[14px] font-light text-[#444444]">{i + 1}</span>
                <div className={i === 0 ? 'bg-white' : ''}><Thumb rows={rows} /></div>
              </div>
            ))}
          </div>
          <div className="relative h-[635px] w-[1194px] shrink-0 overflow-hidden bg-[#f1f1f1]">
            <svg className="absolute inset-0" width="1194" height="635">
              {edges.map(([a, b]) => (
                <line
                  key={`${a}-${b}`}
                  x1={nodes[a].x - CANVAS_X}
                  y1={nodes[a].y - CANVAS_Y}
                  x2={nodes[b].x - CANVAS_X}
                  y2={nodes[b].y - CANVAS_Y}
                  stroke="#d2d2d2"
                  strokeWidth="1.200"
                />
              ))}
            </svg>
            {nodes.map((n, i) => (
              <NodeBubble key={i} node={n} />
            ))}
            {/* list scrollbar */}
            <div className="absolute top-0 left-0 h-full w-[16px] bg-[#f1f1f1]">
              <svg className="absolute top-[7px] left-[4px]" width="8" height="4" viewBox="0 0 8 4"><path d="M4 0l4 4H0z" fill="#b0b0b0" /></svg>
              <div className="absolute top-[17px] left-[2px] h-[181px] w-[13px] bg-[#bdbdbd]" />
              <svg className="absolute top-[626px] left-[4px]" width="8" height="4" viewBox="0 0 8 4"><path d="M4 4l4-4H0z" fill="#555555" /></svg>
            </div>
            <div className="absolute top-[584px] left-[38px]"><ZoomControls /></div>
            <div className="absolute top-[589px] left-[379px] flex items-center">
              <div className="flex h-[13px] w-[13px] items-center justify-center rounded-[2px] bg-[#0a6cff]">
                <Check size={11} strokeWidth={4} className="text-white" />
              </div>
              <span className="ml-[6px] text-[12px] font-light text-[#555555]">Edges</span>
            </div>
          </div>
          <div className="h-[635px] w-[3px] shrink-0 bg-[#d0d0d0]" />
          <div className="pl-[20px] text-[17px] font-light text-[#999999]">Statistics</div>
        </div>
      </div>
    </div>
  );
}
